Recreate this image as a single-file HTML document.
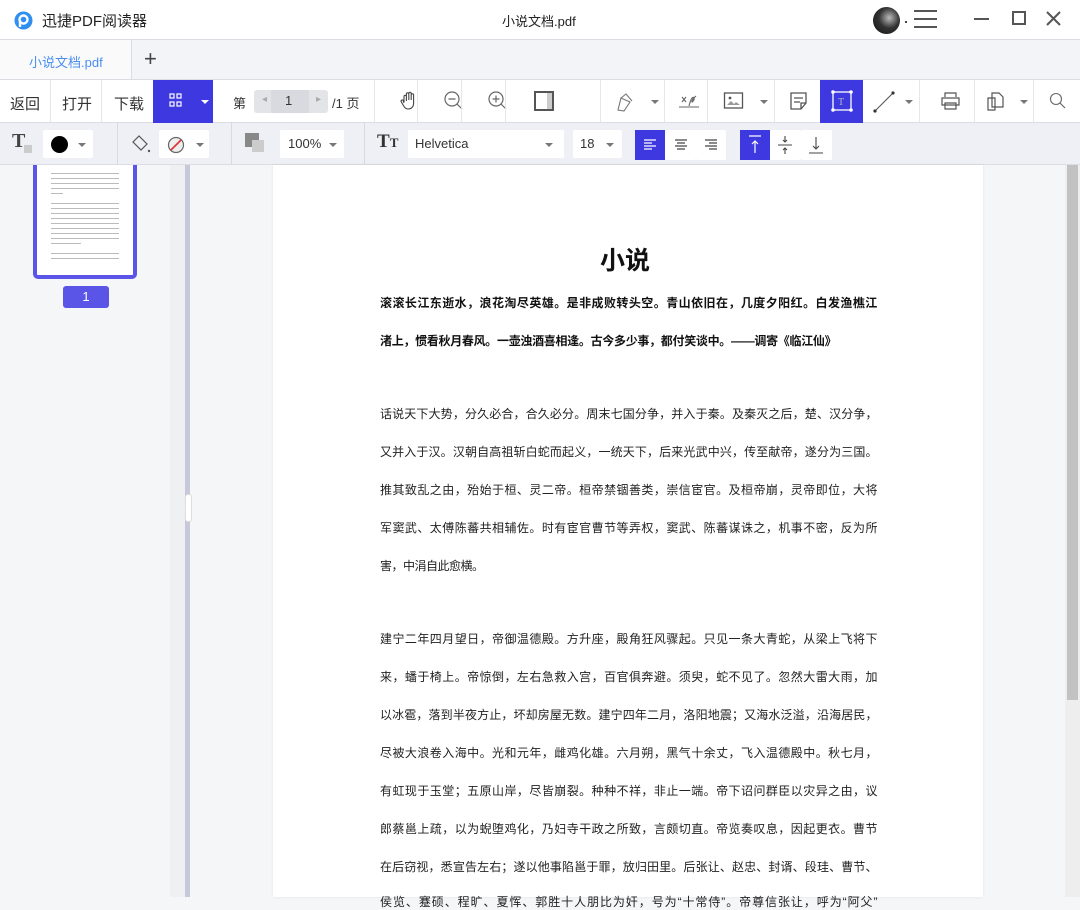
<!DOCTYPE html>
<html><head><meta charset="utf-8"><style>
*{margin:0;padding:0;box-sizing:border-box}
body{width:1080px;height:897px;overflow:hidden;background:#f5f6f8;font-family:"Liberation Sans","Noto Sans CJK SC",sans-serif;color:#333;position:relative}
.abs{position:absolute}
.title{top:0;left:0;width:1080px;height:40px;background:#fff;border-bottom:1px solid #dcdde2}
.tabs{top:40px;left:0;width:1080px;height:40px;background:#f3f4f7;border-bottom:1px solid #dcdde2}
.tb{top:80px;left:0;width:1080px;height:43px;background:#fff;border-bottom:1px solid #dcdde2;font-size:15px}
.fb{top:123px;left:0;width:1080px;height:42px;background:#eef0f5;border-bottom:1px solid #dcdde2}
.blue{background:#3d38e0}
.box{background:#fff;border-radius:2px}
.sep{width:1px;background:#e6e7eb}
.line{position:absolute;left:380px;width:497px;font-size:12px;color:#222;text-align:justify;text-align-last:justify;white-space:nowrap;letter-spacing:-0.5px}
.b{font-weight:bold;color:#111;letter-spacing:-0.3px}
.caret{width:0;height:0;border-left:4px solid transparent;border-right:4px solid transparent;border-top:4px solid #777;position:absolute}
</style></head><body>
<!-- title bar -->
<div class="abs title">
  <svg class="abs" style="left:14px;top:11px" width="19" height="19" viewBox="0 0 19 19"><circle cx="9.5" cy="9.5" r="9" fill="#2f8ff0"/><circle cx="9.5" cy="8.5" r="4" fill="none" stroke="#fff" stroke-width="2.4"/><path d="M6 9v7" stroke="#fff" stroke-width="2.4"/></svg>
  <div class="abs" style="left:42px;top:10px;font-size:15px;color:#222">迅捷PDF阅读器</div>
  <div class="abs" style="left:502px;top:11px;font-size:13px;color:#222">小说文档.pdf</div>
  <div class="abs" style="left:873px;top:7px;width:27px;height:27px;border-radius:50%;background:radial-gradient(circle at 60% 40%,#bbb,#333 45%,#111)"></div>
  <div class="abs" style="left:905px;top:21px;width:2px;height:2px;background:#444"></div>
  <div class="abs" style="left:914px;top:10px;width:23px;height:18px;border-top:2px solid #555;border-bottom:2px solid #555"><div style="margin-top:6px;height:2px;background:#555"></div></div>
  <div class="abs" style="left:974px;top:18px;width:15px;height:2px;background:#555"></div>
  <div class="abs" style="left:1012px;top:11px;width:14px;height:14px;border:2px solid #555"></div>
  <svg class="abs" style="left:1046px;top:11px" width="15" height="15"><path d="M1 1L14 14M14 1L1 14" stroke="#555" stroke-width="2"/></svg>
</div>
<!-- tabs -->
<div class="abs tabs">
  <div class="abs" style="left:0;top:0;width:132px;height:39px;background:#fafafb;border-right:1px solid #dcdde2"></div>
  <div class="abs" style="left:29px;top:12px;font-size:13px;color:#4a8ff0">小说文档.pdf</div>
  <div class="abs" style="left:144px;top:6px;font-size:22px;color:#444;font-weight:300">+</div>
</div>
<!-- toolbar -->
<div class="abs tb">
  <div class="abs" style="left:10px;top:13px">返回</div>
  <div class="abs sep" style="left:50px;top:0;height:42px"></div>
  <div class="abs" style="left:62px;top:13px">打开</div>
  <div class="abs sep" style="left:101px;top:0;height:42px"></div>
  <div class="abs" style="left:114px;top:13px">下载</div>
  <div class="abs blue" style="left:153px;top:0;width:60px;height:43px"></div>
  <svg class="abs" style="left:167px;top:12px" width="18" height="18"><g fill="none" stroke="#fff" stroke-width="1.2"><rect x="3" y="2" width="4" height="4"/><rect x="10" y="2" width="4" height="4"/><rect x="3" y="10" width="4" height="4"/><rect x="10" y="10" width="4" height="4"/></g></svg>
  <div class="caret" style="left:201px;top:20px;border-top-color:#fff"></div>
  <div class="abs" style="left:233px;top:13px;font-size:13px">第</div>
  <div class="abs" style="left:254px;top:10px;width:74px;height:23px;background:#e3e4e8;border-radius:3px"></div>
  <div class="abs" style="left:271px;top:10px;width:38px;height:23px;background:#d9dadf"></div>
  <div class="abs" style="left:262px;top:14px;font-size:10px;color:#aaa">◂</div>
  <div class="abs" style="left:285px;top:13px;font-size:13px">1</div>
  <div class="abs" style="left:316px;top:14px;font-size:10px;color:#aaa">▸</div>
  <div class="abs" style="left:332px;top:13px;font-size:13px">/1 页</div>
  <div class="abs sep" style="left:374px;top:0;height:42px"></div>
  <svg class="abs" style="left:398px;top:10px" width="22" height="22" viewBox="0 0 22 22"><path d="M6 12V6.5a1.2 1.2 0 012.4 0V11M8.4 10V4a1.2 1.2 0 012.4 0v6M10.8 9.5V3.5a1.2 1.2 0 012.4 0V10M13.2 10V5a1.2 1.2 0 012.4 0v8c0 4-2.5 6-5.5 6-2.5 0-3.5-1.5-5-4l-2-3.5a1.2 1.2 0 012-1.2L6 13" fill="none" stroke="#444" stroke-width="1.1"/></svg>
  <div class="abs sep" style="left:417px;top:0;height:42px"></div>
  <svg class="abs" style="left:443px;top:10px" width="22" height="22"><circle cx="9" cy="9" r="7" fill="none" stroke="#666" stroke-width="1.2"/><path d="M5.5 9h7M14 14l5 5" stroke="#666" stroke-width="1.2"/></svg>
  <div class="abs sep" style="left:461px;top:0;height:42px"></div>
  <svg class="abs" style="left:487px;top:10px" width="22" height="22"><circle cx="9" cy="9" r="7" fill="none" stroke="#666" stroke-width="1.2"/><path d="M5.5 9h7M9 5.5v7M14 14l5 5" stroke="#666" stroke-width="1.2"/></svg>
  <div class="abs sep" style="left:505px;top:0;height:42px"></div>
  <div class="abs" style="left:534px;top:11px;width:20px;height:20px;border:2px solid #555"><div style="position:absolute;right:0;top:0;width:5px;height:16px;background:#ccc"></div></div>
  <div class="abs sep" style="left:600px;top:0;height:42px"></div>
  <svg class="abs" style="left:614px;top:10px" width="24" height="24"><path d="M4 20l3-12 9 4-6 9z M7 8l5-4 6 7" fill="none" stroke="#777" stroke-width="1.1"/></svg>
  <div class="caret" style="left:651px;top:20px"></div>
  <div class="abs sep" style="left:664px;top:0;height:42px"></div>
  <svg class="abs" style="left:675px;top:10px" width="26" height="24"><path d="M4 17h20M7 7l4 5M11 7l-4 5M14 16c2-8 4-10 5-8s-3 6-2 3 3-4 4-5" fill="none" stroke="#666" stroke-width="1.1"/></svg>
  <div class="abs sep" style="left:707px;top:0;height:42px"></div>
  <svg class="abs" style="left:723px;top:11px" width="22" height="20"><rect x="1.5" y="2" width="18" height="15" fill="none" stroke="#555" stroke-width="1.3"/><path d="M4 14l4-4 3 3 2-2 4 3z" fill="#999"/><circle cx="7" cy="7" r="1.4" fill="#555"/></svg>
  <div class="caret" style="left:760px;top:20px"></div>
  <div class="abs sep" style="left:774px;top:0;height:42px"></div>
  <svg class="abs" style="left:789px;top:11px" width="20" height="20"><path d="M2 2h15v10l-5 6H2z M12 18v-6h5" fill="none" stroke="#555" stroke-width="1.3"/><path d="M5 7h9M5 11h6" stroke="#555" stroke-width="1.2"/></svg>
  <div class="abs blue" style="left:820px;top:0;width:43px;height:43px"></div>
  <svg class="abs" style="left:829px;top:8px" width="26" height="26"><rect x="4" y="4" width="18" height="18" fill="none" stroke="#fff" stroke-width="1.3"/><g fill="#fff"><circle cx="4" cy="4" r="1.8"/><circle cx="22" cy="4" r="1.8"/><circle cx="4" cy="22" r="1.8"/><circle cx="22" cy="22" r="1.8"/></g><text x="9" y="17" font-size="10" fill="#bbb" font-family="Liberation Serif">T</text></svg>
  <svg class="abs" style="left:873px;top:11px" width="24" height="22"><path d="M2 20L20 2" stroke="#555" stroke-width="1"/><circle cx="2" cy="20" r="1.6" fill="#333"/><circle cx="20" cy="2" r="1.6" fill="#333"/></svg>
  <div class="caret" style="left:905px;top:20px"></div>
  <div class="abs sep" style="left:919px;top:0;height:42px"></div>
  <svg class="abs" style="left:940px;top:11px" width="22" height="20"><path d="M5 6V2h11v4M2 7h17v7H2zM5 12h11v6H5z" fill="#fff" stroke="#555" stroke-width="1.2"/></svg>
  <div class="abs sep" style="left:974px;top:0;height:42px"></div>
  <svg class="abs" style="left:984px;top:9px" width="22" height="24"><path d="M8 4h7l4 4v10H8z M4 9h7v12H4z" fill="#fff" stroke="#555" stroke-width="1.2"/></svg>
  <div class="caret" style="left:1020px;top:20px"></div>
  <div class="abs sep" style="left:1033px;top:0;height:42px"></div>
  <svg class="abs" style="left:1049px;top:12px" width="18" height="18"><circle cx="7" cy="7" r="5.5" fill="none" stroke="#666" stroke-width="1.1"/><path d="M11 11l5 5" stroke="#666" stroke-width="1.2"/></svg>
</div>
<!-- format bar -->
<div class="abs fb">
  <div class="abs" style="left:12px;top:7px;font-size:20px;font-weight:bold;font-family:'Liberation Serif',serif;color:#444">T</div>
  <div class="abs" style="left:24px;top:22px;width:8px;height:8px;background:#ccc"></div>
  <div class="abs box" style="left:43px;top:7px;width:50px;height:28px"></div>
  <div class="abs" style="left:51px;top:13px;width:17px;height:17px;border-radius:50%;background:#000"></div>
  <div class="caret" style="left:78px;top:20px"></div>
  <div class="abs sep" style="left:117px;top:0;height:41px;background:#d8dae0"></div>
  <svg class="abs" style="left:130px;top:10px" width="22" height="22"><path d="M3 9l6-6 8 8-6 6z" fill="none" stroke="#555" stroke-width="1.2"/><circle cx="19" cy="18" r="1.2" fill="#555"/></svg>
  <div class="abs box" style="left:159px;top:7px;width:50px;height:28px"></div>
  <svg class="abs" style="left:167px;top:13px" width="18" height="18"><circle cx="9" cy="9" r="7.5" fill="#eee" stroke="#666" stroke-width="1.2"/><path d="M4 14L14 4" stroke="#e03030" stroke-width="1.6"/></svg>
  <div class="caret" style="left:196px;top:20px"></div>
  <div class="abs sep" style="left:231px;top:0;height:41px;background:#d8dae0"></div>
  <div class="abs" style="left:245px;top:10px;width:14px;height:14px;background:#888"></div>
  <div class="abs" style="left:252px;top:17px;width:12px;height:12px;background:#ccc"></div>
  <div class="abs box" style="left:280px;top:7px;width:64px;height:28px"></div>
  <div class="abs" style="left:288px;top:13px;font-size:13px">100%</div>
  <div class="caret" style="left:329px;top:20px"></div>
  <div class="abs sep" style="left:364px;top:0;height:41px;background:#d8dae0"></div>
  <div class="abs" style="left:377px;top:8px;font-size:19px;font-weight:bold;font-family:'Liberation Serif',serif;color:#333">T<span style="font-size:13px">T</span></div>
  <div class="abs box" style="left:408px;top:7px;width:156px;height:28px"></div>
  <div class="abs" style="left:415px;top:13px;font-size:13px">Helvetica</div>
  <div class="caret" style="left:545px;top:20px"></div>
  <div class="abs box" style="left:573px;top:7px;width:49px;height:28px"></div>
  <div class="abs" style="left:580px;top:13px;font-size:13px">18</div>
  <div class="caret" style="left:606px;top:20px"></div>
  <div class="abs blue" style="left:635px;top:7px;width:30px;height:30px"></div>
  <svg class="abs" style="left:643px;top:15px" width="14" height="14"><path d="M1 2h12M1 5h8M1 8h12M1 11h8" stroke="#fff" stroke-width="1.2"/></svg>
  <div class="abs box" style="left:665px;top:7px;width:31px;height:30px"></div>
  <svg class="abs" style="left:674px;top:15px" width="14" height="14"><path d="M1 2h12M3 5h8M1 8h12M3 11h8" stroke="#444" stroke-width="1.2"/></svg>
  <div class="abs box" style="left:696px;top:7px;width:30px;height:30px"></div>
  <svg class="abs" style="left:704px;top:15px" width="14" height="14"><path d="M1 2h12M5 5h8M1 8h12M5 11h8" stroke="#444" stroke-width="1.2"/></svg>
  <div class="abs blue" style="left:740px;top:7px;width:30px;height:30px"></div>
  <svg class="abs" style="left:747px;top:11px" width="16" height="22"><path d="M2 2h12M8 19V7M5 10l3-3 3 3" fill="none" stroke="#fff" stroke-width="1.2"/></svg>
  <div class="abs box" style="left:770px;top:7px;width:31px;height:30px"></div>
  <svg class="abs" style="left:777px;top:11px" width="16" height="22"><path d="M1 11h14M8 2v6M6 6l2 2 2-2M8 20v-6M6 16l2-2 2 2" fill="none" stroke="#444" stroke-width="1.1"/></svg>
  <div class="abs box" style="left:801px;top:7px;width:31px;height:30px"></div>
  <svg class="abs" style="left:808px;top:11px" width="16" height="22"><path d="M1 19h14M8 3v12M5 12l3 3 3-3" fill="none" stroke="#444" stroke-width="1.1"/></svg>
</div>
<!-- sidebar -->
<div class="abs" style="left:0;top:165px;width:170px;height:732px;background:#f5f6f8;overflow:hidden">
  <div class="abs" style="left:33px;top:-12px;width:104px;height:126px;border:4px solid #5a55e6;border-radius:5px;background:#fff;overflow:hidden">
    <div style="margin:4px 0 0 14px;width:68px">
    <div style="height:2px;background:#888"></div>
    <div style="height:1px;background:#bbb;margin-top:10px"></div><div style="height:1px;background:#bbb;margin-top:4px"></div><div style="height:1px;background:#bbb;margin-top:4px"></div><div style="height:1px;background:#bbb;margin-top:4px"></div><div style="height:1px;width:12px;background:#bbb;margin-top:4px"></div>
    <div style="height:1px;background:#bbb;margin-top:9px"></div><div style="height:1px;background:#bbb;margin-top:4px"></div><div style="height:1px;background:#bbb;margin-top:4px"></div><div style="height:1px;background:#bbb;margin-top:4px"></div><div style="height:1px;background:#bbb;margin-top:4px"></div><div style="height:1px;background:#bbb;margin-top:4px"></div><div style="height:1px;background:#bbb;margin-top:4px"></div><div style="height:1px;background:#bbb;margin-top:4px"></div><div style="height:1px;width:30px;background:#bbb;margin-top:4px"></div>
    <div style="height:1px;background:#bbb;margin-top:9px"></div><div style="height:1px;background:#bbb;margin-top:4px"></div>
    </div>
  </div>
  <div class="abs" style="left:63px;top:121px;width:46px;height:22px;background:#5a55e6;border-radius:3px;color:#fff;font-size:13px;text-align:center;line-height:22px">1</div>
</div>
<div class="abs" style="left:170px;top:165px;width:15px;height:732px;background:#eff0f2"></div>
<div class="abs" style="left:185px;top:165px;width:5px;height:732px;background:#c5c9da"></div>
<div class="abs" style="left:185px;top:494px;width:7px;height:28px;background:#fff;border-radius:3px;border:1px solid #ddd"></div>
<!-- viewer -->
<div class="abs" style="left:273px;top:165px;width:710px;height:732px;background:#fff;box-shadow:0 0 3px rgba(0,0,0,.08)"></div>
<div class="abs" style="left:1065px;top:165px;width:15px;height:732px;background:#eee"></div>
<div class="abs" style="left:1067px;top:165px;width:11px;height:535px;background:#c2c2c2"></div>
<div class="abs" style="left:600px;top:241px;font-size:25px;font-weight:bold;color:#111">小说</div>
<div class="line b" style="top:294px">滚滚长江东逝水，浪花淘尽英雄。是非成败转头空。青山依旧在，几度夕阳红。白发渔樵江</div>
<div class="line b" style="top:332px;text-align-last:left">渚上，惯看秋月春风。一壶浊酒喜相逢。古今多少事，都付笑谈中。——调寄《临江仙》</div>
<div class="line" style="top:405px">话说天下大势，分久必合，合久必分。周末七国分争，并入于秦。及秦灭之后，楚、汉分争，</div>
<div class="line" style="top:443px">又并入于汉。汉朝自高祖斩白蛇而起义，一统天下，后来光武中兴，传至献帝，遂分为三国。</div>
<div class="line" style="top:481px">推其致乱之由，殆始于桓、灵二帝。桓帝禁锢善类，崇信宦官。及桓帝崩，灵帝即位，大将</div>
<div class="line" style="top:519px">军窦武、太傅陈蕃共相辅佐。时有宦官曹节等弄权，窦武、陈蕃谋诛之，机事不密，反为所</div>
<div class="line" style="top:557px;text-align-last:left">害，中涓自此愈横。</div>
<div class="line" style="top:630px">建宁二年四月望日，帝御温德殿。方升座，殿角狂风骤起。只见一条大青蛇，从梁上飞将下</div>
<div class="line" style="top:668px">来，蟠于椅上。帝惊倒，左右急救入宫，百官俱奔避。须臾，蛇不见了。忽然大雷大雨，加</div>
<div class="line" style="top:706px">以冰雹，落到半夜方止，坏却房屋无数。建宁四年二月，洛阳地震；又海水泛溢，沿海居民，</div>
<div class="line" style="top:744px">尽被大浪卷入海中。光和元年，雌鸡化雄。六月朔，黑气十余丈，飞入温德殿中。秋七月，</div>
<div class="line" style="top:782px">有虹现于玉堂；五原山岸，尽皆崩裂。种种不祥，非止一端。帝下诏问群臣以灾异之由，议</div>
<div class="line" style="top:820px">郎蔡邕上疏，以为蜺堕鸡化，乃妇寺干政之所致，言颇切直。帝览奏叹息，因起更衣。曹节</div>
<div class="line" style="top:858px">在后窃视，悉宣告左右；遂以他事陷邕于罪，放归田里。后张让、赵忠、封谞、段珪、曹节、</div>
<div class="line" style="top:893px">侯览、蹇硕、程旷、夏恽、郭胜十人朋比为奸，号为“十常侍”。帝尊信张让，呼为“阿父”</div>
</body></html>
